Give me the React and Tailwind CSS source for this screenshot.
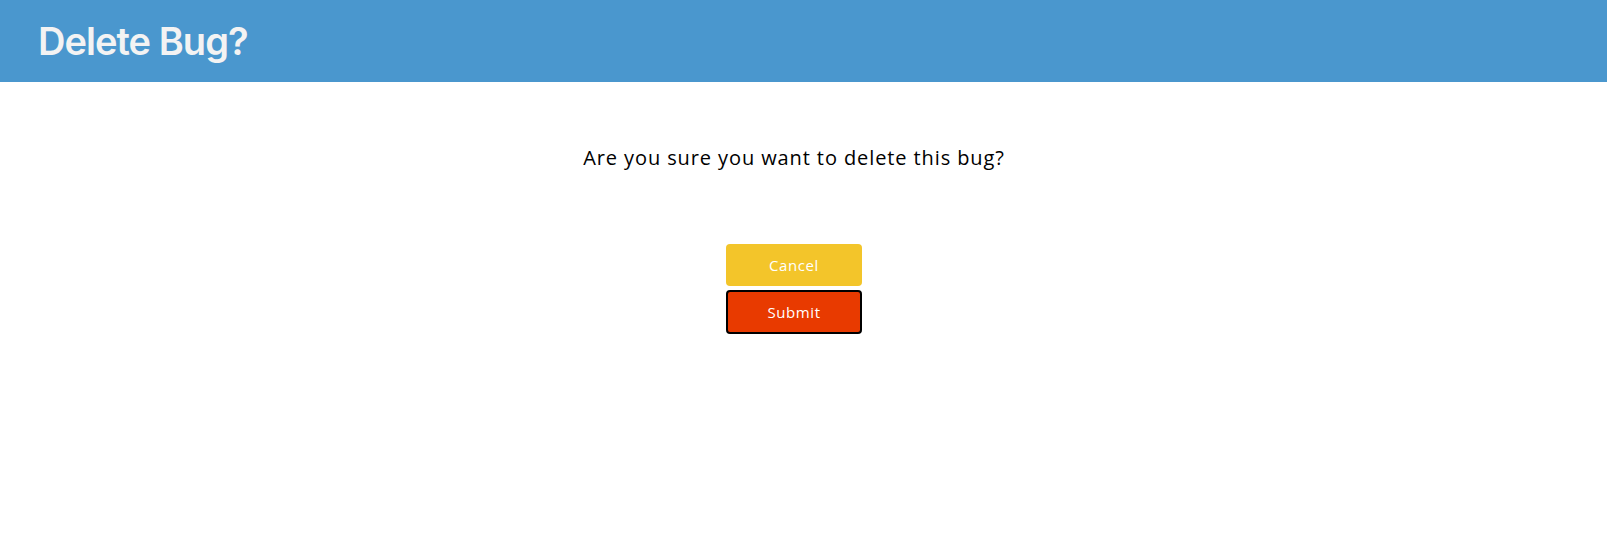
export default function App() {
    return (
        <div className="min-h-[542px] bg-white">
            <header className="h-[82px] bg-[#4a97ce] flex items-center pl-[38px]">
                <h1 className="text-[38px] font-semibold text-[#f3f3f3] font-['Inter',sans-serif] tracking-tight">
                    Delete Bug?
                </h1>
            </header>
            <div className="flex flex-col items-center pr-[19px] font-['Open_Sans',sans-serif]">
                <p className="mt-[61px] text-[20px] tracking-[0.9px] text-black">
                    Are you sure you want to delete this bug?
                </p>
                <div className="mt-[71px] flex flex-col gap-1 w-[136px]">
                    <button className="h-[42px] rounded bg-[#f3c52a] text-white text-[15px] tracking-[0.6px]">
                        Cancel
                    </button>
                    <button className="h-[44px] rounded border-2 border-black bg-[#e83a00] text-white text-[15px] tracking-[0.6px]">
                        Submit
                    </button>
                </div>
            </div>
        </div>
    );
}
